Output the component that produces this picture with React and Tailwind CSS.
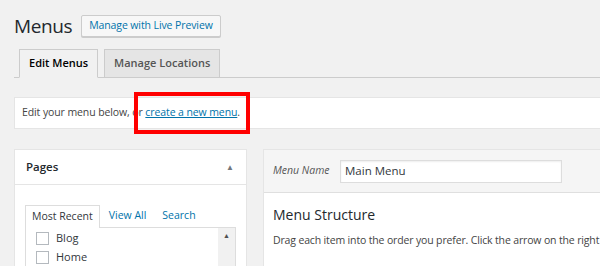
import React from 'react';

const Checkbox = ({ label }) => (
  <label className="flex items-center h-[19px] gap-[7px] text-[11px] text-[#32373c]">
    <span className="w-[13px] h-[13px] border border-[#b4b9be] bg-white" />
    {label}
  </label>
);

export default function App() {
  return (
    <div className="w-[600px] h-[266px] overflow-hidden bg-[#f1f1f1] pl-[14px] font-['Open_Sans',sans-serif] text-[#23282d]">
      {/* title row */}
      <div className="flex items-center pt-[15px] h-[37px]">
        <h1 className="text-[19px] leading-[22px] font-normal text-[#23282d] tracking-[-0.4px]">Menus</h1>
        <button className="ml-[9px] h-[22px] px-[7px] border border-[#ccc] rounded-[2px] bg-[#f7f7f7] text-[#0073aa] text-[10.5px] font-medium tracking-[-0.1px] shadow-[0_1px_0_#ccc]">
          Manage with Live Preview
        </button>
      </div>

      {/* tabs */}
      <div className="mt-[12px] flex items-end gap-[6px] pl-[5px] border-b border-[#ccc] h-[29px]">
        <div className="-mb-px h-[29px] px-[9px] flex items-center border border-[#ccc] border-b-[#f1f1f1] bg-[#f1f1f1] text-[11px] font-semibold text-black">
          Edit Menus
        </div>
        <div className="h-[28px] px-[9px] flex items-center border border-b-0 border-[#ccc] bg-[#e5e5e5] text-[11px] font-semibold text-[#555]">
          Manage Locations
        </div>
      </div>

      {/* notice */}
      <div className="mt-[19px] h-[32px] bg-white border border-[#e5e5e5] border-r-0 flex items-center px-[7px] text-[10.5px] tracking-[-0.1px] text-[#444]">
        <span>Edit your menu below, or&nbsp;</span>
        <span className="relative">
          <span className="text-[#0073aa] underline">create a new menu</span>.
          <span className="absolute left-[-11px] right-[-10px] top-[-13px] bottom-[-13px] border-[4px] border-[#ff0000]" />
        </span>
      </div>

      {/* columns */}
      <div className="mt-[20px] flex gap-[16px]">
        {/* pages panel */}
        <div className="w-[233px] shrink-0 bg-white border border-[#e5e5e5]">
          <div className="h-[35px] flex items-center justify-between pl-[11px] pr-[12px] border-b border-[#e5e5e5]">
            <span className="text-[11.5px] font-semibold text-[#23282d]">Pages</span>
            <span className="text-[8px] text-[#72777c]">▲</span>
          </div>
          <div className="px-[10px] pt-[19px]">
            <div className="flex items-end h-[23px] text-[10.5px]">
              <span className="h-[23px] px-[6px] flex items-center bg-white border border-b-0 border-[#ddd] text-[#32373c] -mb-px relative z-10">Most Recent</span>
              <span className="pl-[9px] pr-[8px] text-[#0073aa] h-[23px] flex items-center">View All</span>
              <span className="pl-[8px] text-[#0073aa] h-[23px] flex items-center">Search</span>
            </div>
            <div className="border border-[#ddd] flex h-[60px]">
              <div className="flex-1 pl-[10px] pt-[1px]">
                <Checkbox label="Blog" />
                <Checkbox label="Home" />
              </div>
              <div className="w-[17px] bg-[#f1f1f1] flex justify-center pt-[4px]">
                <span className="text-[7px] text-[#505050] leading-none">▲</span>
              </div>
            </div>
          </div>
        </div>

        {/* menu panel */}
        <div className="flex-1 min-w-0 overflow-hidden bg-white border border-[#e5e5e5] border-r-0">
          <div className="h-[43px] bg-[#f5f5f5] border-b border-[#dfdfdf] flex items-center pl-[9px]">
            <span className="italic text-[10.5px] text-[#555] w-[67px]">Menu Name</span>
            <div className="w-[222px] h-[23px] bg-white border border-[#ddd] shadow-[inset_0_1px_2px_rgba(0,0,0,0.07)] flex items-center pl-[4px] text-[11.5px] text-[#32373c]">
              Main Menu
            </div>
          </div>
          <div className="pl-[9px] pt-[13px]">
            <h3 className="text-[14px] leading-[18px] text-[#23282d] font-normal">Menu Structure</h3>
            <p className="mt-[9px] text-[10.5px] tracking-[-0.15px] text-[#444] whitespace-nowrap">
              Drag each item into the order you prefer. Click the arrow on the right of the item to reveal additional configuration options.
            </p>
          </div>
        </div>
      </div>
    </div>
  );
}
